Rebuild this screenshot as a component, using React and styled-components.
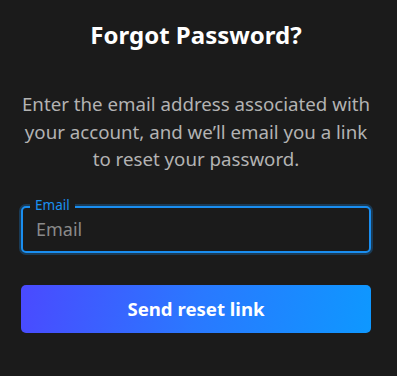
import React from "react";
import styled, { createGlobalStyle } from "styled-components";

const GlobalStyle = createGlobalStyle`
  * { box-sizing: border-box; }
  html, body {
    margin: 0;
    padding: 0;
    background: #1b1b1b;
    font-family: "Noto Sans", "Open Sans", sans-serif;
  }
`;

const Page = styled.div`
  min-height: 376px;
  padding: 20px 26px 0 21px;
  background: #1b1b1b;
`;

const Card = styled.div`
  width: 350px;
  display: flex;
  flex-direction: column;
`;

const Title = styled.h1`
  margin: 0;
  font-size: 24px;
  line-height: 30px;
  font-weight: 700;
  color: #ffffff;
  text-align: center;
`;

const Description = styled.p`
  margin: 40px 0 0;
  font-size: 18.7px;
  line-height: 27.5px;
  color: #b3b3b3;
  text-align: center;
`;

const Field = styled.div`
  position: relative;
  margin-top: 33px;
`;

const FieldLabel = styled.label`
  position: absolute;
  top: -9px;
  left: 9px;
  padding: 0 5px;
  background: #1b1b1b;
  font-size: 13.5px;
  line-height: 16px;
  color: #1a90f0;
`;

const Input = styled.input`
  display: block;
  width: 100%;
  height: 47px;
  padding: 0 13px;
  border: 2px solid #1a8ef0;
  border-radius: 5px;
  background: #1b1b1b;
  box-shadow: 0 0 0 2px rgba(26, 142, 240, 0.28);
  font-family: inherit;
  font-size: 18px;
  color: #e0e0e0;
  outline: none;
  caret-color: #1a8ef0;

  &::placeholder {
    color: #8a8a8a;
  }
`;

const SubmitButton = styled.button`
  margin-top: 32px;
  height: 48px;
  width: 100%;
  border: none;
  border-radius: 5px;
  background: linear-gradient(100deg, #4a4aff 0%, #2a78ff 50%, #0e98ff 100%);
  font-family: inherit;
  font-size: 18.6px;
  font-weight: 700;
  color: #ffffff;
  cursor: pointer;
`;

export default function App() {
  return (
    <>
      <GlobalStyle />
      <Page>
        <Card>
          <Title>Forgot Password?</Title>
          <Description>
            Enter the email address associated with your account, and we’ll
            email you a link to reset your password.
          </Description>
          <Field>
            <FieldLabel htmlFor="email">Email</FieldLabel>
            <Input id="email" type="email" placeholder="Email" autoFocus />
          </Field>
          <SubmitButton>Send reset link</SubmitButton>
        </Card>
      </Page>
    </>
  );
}
